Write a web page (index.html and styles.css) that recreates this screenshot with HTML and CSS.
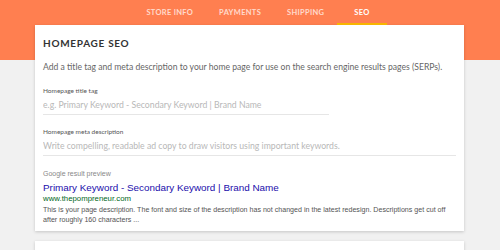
FILE: index.html
```html
<!DOCTYPE html>
<html lang="en">
<head>
  <meta charset="UTF-8" />
  <title>Store Settings - SEO</title>
  <link rel="stylesheet" href="styles.css">
</head>
<body>
  <nav class="tabs">
    <a href="#" class="tab">STORE INFO</a>
    <a href="#" class="tab">PAYMENTS</a>
    <a href="#" class="tab">SHIPPING</a>
    <a href="#" class="tab active">SEO</a>
  </nav>

  <div class="card">
    <h2>HOMEPAGE SEO</h2>
    <p class="intro">Add a title tag and meta description to your home page for use on the search engine results pages (SERPs).</p>

    <label class="field">
      <span class="field-label">Homepage title tag</span>
      <input type="text" class="title-input" placeholder="e.g. Primary Keyword - Secondary Keyword | Brand Name">
    </label>

    <label class="field">
      <span class="field-label">Homepage meta description</span>
      <input type="text" class="desc-input" placeholder="Write compelling, readable ad copy to draw visitors using important keywords.">
    </label>

    <div class="preview">
      <div class="preview-label">Google result preview</div>
      <div class="serp-title">Primary Keyword - Secondary Keyword | Brand Name</div>
      <div class="serp-url">www.thepompreneur.com</div>
      <div class="serp-desc">This is your page description. The font and size of the description has not changed in the latest redesign. Descriptions get cut off after roughly 160 characters ...</div>
    </div>
  </div>

  <div class="card next"></div>
</body>
</html>
```

FILE: styles.css
```css
body {
  margin: 0;
  font-family: Lato, "Open Sans", sans-serif;
  background: linear-gradient(#ff7f50 0, #ff7f50 60px, #f1f1f1 60px);
  height: 250px;
  overflow: hidden;
}
.tabs {
  display: flex;
  justify-content: center;
  height: 25px;
  padding-left: 16px;
}
.tab {
  display: flex;
  align-items: center;
  padding: 0 13px;
  font-size: 7.5px;
  font-weight: bold;
  letter-spacing: 0.3px;
  color: rgba(255,255,255,0.72);
  text-decoration: none;
}
.tab.active {
  color: #fff;
  padding: 0 17px;
  margin: 0 -4px 0 0;
  box-shadow: inset 0 -2px #f7b500;
}
.card {
  width: 413px;
  margin: 0 0 0 35px;
  padding: 12px 8px 6px;
  background: #fff;
  box-shadow: 0 1px 3px rgba(0,0,0,0.18);
}
h2 {
  margin: 0;
  font-size: 10px;
  letter-spacing: 0.7px;
  color: #333;
  line-height: 12px;
}
.intro {
  margin: 12px 0 0;
  font-size: 8.6px;
  line-height: 12px;
  color: #666;
  white-space: nowrap;
}
.field {
  display: block;
  margin-top: 14px;
}
.field + .field {
  margin-top: 13px;
}
.field-label {
  display: block;
  font-size: 6.5px;
  color: #555;
  line-height: 8px;
}
.field input {
  display: block;
  margin-top: 2px;
  padding: 0 0 2px;
  height: 15px;
  border: none;
  border-bottom: 1px solid #e6e6e6;
  font-family: Lato, sans-serif;
  font-size: 8.7px;
  color: #333;
  outline: none;
}
.field input::placeholder {
  color: #b8b8b8;
}
.title-input {
  width: 286px;
}
.desc-input {
  width: 413px;
}
.preview {
  margin-top: 13px;
  font-family: "Liberation Sans", Arial, sans-serif;
}
.preview-label {
  font-size: 7px;
  color: #888;
  line-height: 9px;
}
.serp-title {
  margin-top: 3px;
  font-size: 9.9px;
  color: #1a0dab;
  line-height: 13px;
}
.serp-url {
  font-size: 7.8px;
  color: #006621;
  line-height: 10px;
}
.serp-desc {
  margin-top: 1px;
  font-size: 7.1px;
  color: #545454;
  line-height: 10px;
}
.card.next {
  margin-top: 10px;
  height: 30px;
  padding: 0 8px;
}
```
